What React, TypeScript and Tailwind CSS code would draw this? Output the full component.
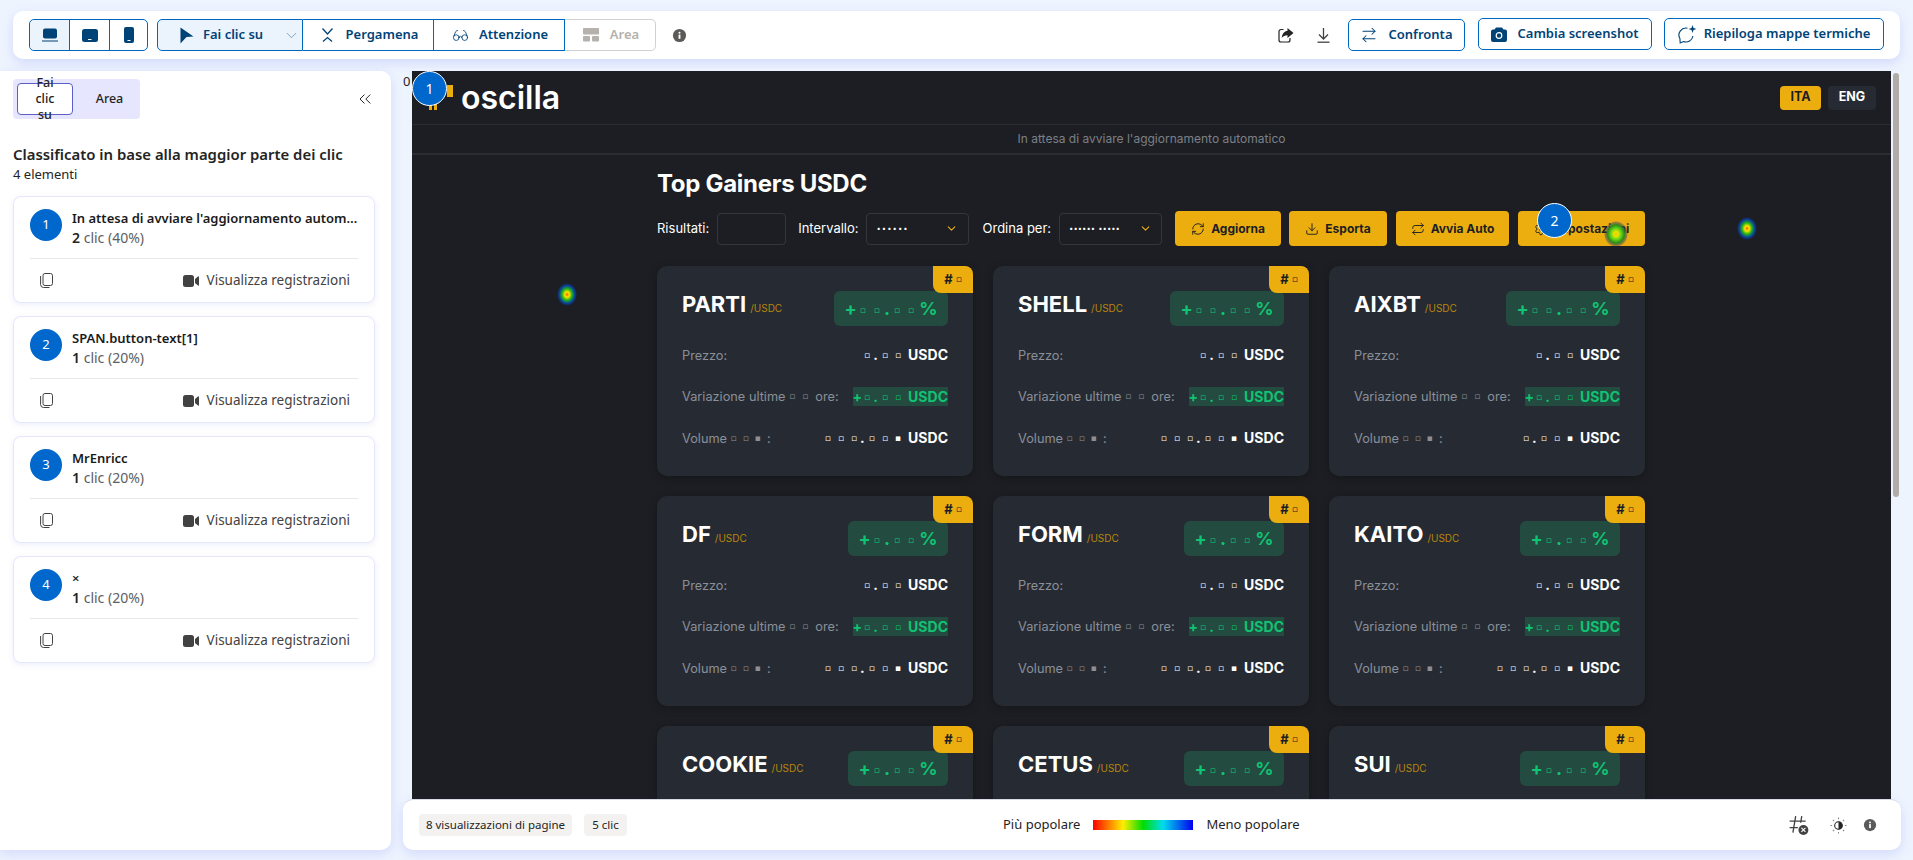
import { ChevronDown, ChevronsLeft, ArrowRightLeft, Glasses, RefreshCw, Download, Repeat, Settings } from "lucide-react";

const navy = "#004377";

function Info({ size = 16 }: { size?: number }) {
  return (
    <svg width={size} height={size} viewBox="0 0 16 16">
      <circle cx="8" cy="8" r="7" fill="#5c5a58" />
      <rect x="7" y="7" width="2" height="4.5" fill="#fff" />
      <circle cx="8" cy="5" r="1.1" fill="#fff" />
    </svg>
  );
}

function Laptop() {
  return (
    <svg width="16" height="14" viewBox="0 0 16 14" fill={navy}>
      <rect x="1" y="0.5" width="14" height="10" rx="2" />
      <rect x="0" y="12.5" width="16" height="1" />
    </svg>
  );
}

function Tablet() {
  return (
    <svg width="16" height="13" viewBox="0 0 16 13">
      <rect x="0" y="0" width="16" height="13" rx="2.5" fill={navy} />
      <rect x="6" y="10" width="3.5" height="1" fill="#fff" />
    </svg>
  );
}

function Phone() {
  return (
    <svg width="10" height="16" viewBox="0 0 10 16">
      <rect x="0" y="0" width="10" height="16" rx="2" fill={navy} />
      <rect x="3.5" y="13" width="3" height="1" fill="#fff" />
    </svg>
  );
}

function Cursor() {
  return (
    <svg width="14" height="17" viewBox="0 0 14 17" fill={navy}>
      <path d="M0.5 0.5 L13.5 9.5 L6.5 10 L0.5 16.5 Z" />
    </svg>
  );
}

function Scroll() {
  return (
    <svg width="11" height="14" viewBox="0 0 11 14" fill="none" stroke={navy} strokeWidth="1.3">
      <path d="M0.5 0.5 L5.5 6 L10.5 0.5" />
      <path d="M1 13.5 L5.5 9.5 L10 13.5" />
    </svg>
  );
}

function AreaIcon() {
  return (
    <svg width="16" height="14" viewBox="0 0 16 14" fill="#b5b1ac">
      <rect x="0" y="0" width="16" height="6.5" rx="1" />
      <rect x="0" y="8" width="7" height="5.5" rx="1" />
      <rect x="9" y="8" width="7" height="5.5" rx="1" />
    </svg>
  );
}

function ShareIcon() {
  return (
    <svg width="16" height="16" viewBox="0 0 16 16" fill="none">
      <path d="M5.5 2.5 H3 a2 2 0 0 0 -2 2 V13 a2 2 0 0 0 2 2 H10 a2 2 0 0 0 2 -2 V11" stroke="#242424" strokeWidth="1.2" />
      <path d="M9.5 1 L15.5 6 L9.5 11 V8.2 C7 8.2 5 9 3.8 11 C4 7.2 6.2 4.2 9.5 3.8 Z" fill="#242424" />
    </svg>
  );
}

function SaveIcon() {
  return (
    <svg width="13" height="15" viewBox="0 0 13 15" fill="none" stroke="#424242" strokeWidth="1.3">
      <path d="M6.5 0 V10.5 M2 6.5 L6.5 11 L11 6.5" />
      <path d="M0.5 14.2 H12.5" />
    </svg>
  );
}

function CameraIcon() {
  return (
    <svg width="16" height="15" viewBox="0 0 16 15">
      <path d="M5 0.5 H11 L12.5 2.5 H14 a2 2 0 0 1 2 2 V13 a2 2 0 0 1 -2 2 H2 a2 2 0 0 1 -2 -2 V4.5 a2 2 0 0 1 2 -2 H3.5 Z" fill={navy} />
      <circle cx="8" cy="8.5" r="2.8" fill="none" stroke="#fff" strokeWidth="1.2" />
    </svg>
  );
}

function SummaryIcon() {
  return (
    <svg width="19" height="20" viewBox="0 0 19 20" fill="none">
      <path d="M9.5 4.2 A7 7 0 0 0 1.9 14.5 L2.2 19 L5.5 17.5 A7 7 0 0 0 14.9 12" stroke={navy} strokeWidth="1.1" />
      <path d="M14.5 1 L15.5 4 L18.5 5 L15.5 6 L14.5 9 L13.5 6 L10.5 5 L13.5 4 Z" fill={navy} />
    </svg>
  );
}

function CopyIcon() {
  return (
    <svg width="13" height="15" viewBox="0 0 13 15" fill="none" stroke="#424242" strokeWidth="1">
      <rect x="3" y="0.5" width="9.5" height="12" rx="2" />
      <path d="M0.6 3 V11.5 A3 3 0 0 0 3.6 14.5 H9.5" />
    </svg>
  );
}

function VideoIcon() {
  return (
    <svg width="16" height="12" viewBox="0 0 16 12" fill="#424242">
      <rect x="0" y="0" width="11" height="12" rx="2.5" />
      <path d="M12 4 L15 1.5 Q16 1 16 2 V10 Q16 11 15 10.5 L12 8 Z" />
    </svg>
  );
}

function HashOff() {
  return (
    <svg width="20" height="21" viewBox="0 0 18 19" fill="none">
      <path d="M6 1 L3.5 16 M11.5 1 L10.5 7 M0.5 5.5 H15 M0.5 11.5 H8" stroke="#424242" strokeWidth="1.2" />
      <circle cx="13" cy="13.5" r="4.5" fill="#424242" />
      <path d="M11.2 11.7 L14.8 15.3 M14.8 11.7 L11.2 15.3" stroke="#fff" strokeWidth="1" />
    </svg>
  );
}

function ContrastIcon() {
  return (
    <svg width="17" height="17" viewBox="0 0 16 16" fill="none">
      <circle cx="8" cy="8" r="3.6" fill="#fff" stroke="#242424" strokeWidth="1" />
      <path d="M8 4.4 A3.6 3.6 0 0 1 8 11.6 Z" fill="#242424" />
      <path d="M8 0.5 V2 M8 14 V15.5 M0.5 8 H2 M14 8 H15.5 M2.7 2.7 L3.8 3.8 M12.2 12.2 L13.3 13.3 M2.7 13.3 L3.8 12.2 M12.2 3.8 L13.3 2.7" stroke="#8a8886" strokeWidth="1" />
    </svg>
  );
}

function Logo() {
  return (
    <svg width="28" height="25" viewBox="0 0 28 25" fill="#ecae0e">
      <rect x="22" y="0" width="6" height="12" />
      <rect x="4" y="18" width="3" height="7" />
      <rect x="9" y="18" width="3" height="7" />
    </svg>
  );
}

// the capture had its digits masked, so they are little squares in the picture
function Mask({ text, pitch = "tracking-[7px]" }: { text: string; pitch?: string }) {
  return <span className={`font-['DejaVu_Sans'] align-[2px] text-[9px] font-normal ${pitch}`}>{text}</span>;
}

function Num({ parts, pitch, tail = "tracking-[3px]" }: { parts: string; pitch?: string; tail?: string }) {
  const [whole, frac] = parts.split(".");
  return (
    <span>
      {whole.length > 1 && <Mask text={whole.slice(0, -1)} pitch={pitch} />}
      <Mask text={whole.slice(-1)} pitch={tail} />
      <span className="mr-[4px] font-bold">.</span>
      <Mask text={frac} pitch={pitch} />
    </span>
  );
}

type Coin = { name: string; pct: string; price: string; change: string; volume: string };

function CoinCard({ coin }: { coin: Coin }) {
  return (
    <div className="relative h-[210px] w-[316px] rounded-[10px] bg-[#262b33] px-[25px] pt-[25px] shadow-[0_2px_8px_rgba(0,0,0,0.25)]">
      <div className="absolute right-0 top-0 flex h-[27px] w-[40px] items-center justify-center gap-[3px] rounded-bl-[8px] rounded-tr-[8px] bg-[#ecae0e] text-[13px] font-bold text-[#1c1e23]">
        #<Mask text="▫" pitch="tracking-normal" />
      </div>
      <div className="flex items-center justify-between">
        <div className="mt-[-9px] flex items-baseline gap-[4px]">
          <span className="text-[22px] font-bold leading-[28px] text-white">{coin.name}</span>
          <span className="text-[10px] text-[#b8860b]">/USDC</span>
        </div>
        <div className={`flex h-[35px] items-center justify-center rounded-[6px] bg-[#234b40] text-[18px] font-bold text-[#10c474] ${coin.pct.length > 4 ? "w-[114px]" : "w-[100px]"}`}>
          +<span className="ml-[3px]"><Num parts={coin.pct.slice(0, -1)} pitch="tracking-[8px]" tail="tracking-[4px]" /><Mask text={coin.pct.slice(-1)} pitch="tracking-[5px]" /></span>%
        </div>
      </div>
      <div className="mt-[18px] flex flex-col gap-[20px] text-[12.75px] leading-[21px]">
        <div className="flex items-center justify-between">
          <span className="text-[#8a8f98]">Prezzo:</span>
          <span className="text-[14px] font-bold text-white">
            <Num parts={coin.price} />USDC
          </span>
        </div>
        <div className="flex items-center justify-between">
          <span className="text-[#8a8f98]">
            Variazione ultime <Mask text="▫▫" />ore:
          </span>
          <span className="flex h-[19px] w-[95px] items-center justify-end whitespace-nowrap bg-[#234b40] text-[14px] font-bold text-[#10c474]">
            <span>+<span className="ml-[2px]"><Num parts={coin.change} /></span>USDC</span>
          </span>
        </div>
        <div className="flex items-center justify-between">
          <span className="text-[#8a8f98]">
            Volume <Mask text="▫▫▪" pitch="tracking-[6px]" />:
          </span>
          <span className="text-[14px] font-bold text-white">
            <Num parts={coin.volume} />USDC
          </span>
        </div>
      </div>
    </div>
  );
}

const coins: Coin[] = [
  { name: "PARTI", pct: "▫▫.▫▫", price: "▫.▫▫", change: "▫.▫▫", volume: "▫▫▫.▫▫▪" },
  { name: "SHELL", pct: "▫▫.▫▫", price: "▫.▫▫", change: "▫.▫▫", volume: "▫▫▫.▫▫▪" },
  { name: "AIXBT", pct: "▫▫.▫▫", price: "▫.▫▫", change: "▫.▫▫", volume: "▫.▫▫▪" },
  { name: "DF", pct: "▫.▫▫", price: "▫.▫▫", change: "▫.▫▫", volume: "▫▫▫.▫▫▪" },
  { name: "FORM", pct: "▫.▫▫", price: "▫.▫▫", change: "▫.▫▫", volume: "▫▫▫.▫▫▪" },
  { name: "KAITO", pct: "▫.▫▫", price: "▫.▫▫", change: "▫.▫▫", volume: "▫▫▫.▫▫▪" },
  { name: "COOKIE", pct: "▫.▫▫", price: "▫.▫▫", change: "▫.▫▫", volume: "▫▫▫.▫▫▪" },
  { name: "CETUS", pct: "▫.▫▫", price: "▫.▫▫", change: "▫.▫▫", volume: "▫▫▫.▫▫▪" },
  { name: "SUI", pct: "▫.▫▫", price: "▫.▫▫", change: "▫.▫▫", volume: "▫▫▫.▫▫▪" },
];

const clicks = [
  { n: 1, title: "In attesa di avviare l'aggiornamento automatico", count: 2, pct: 40 },
  { n: 2, title: "SPAN.button-text[1]", count: 1, pct: 20 },
  { n: 3, title: "MrEnricc", count: 1, pct: 20 },
  { n: 4, title: "×", count: 1, pct: 20 },
];

function ClickCard({ item }: { item: (typeof clicks)[number] }) {
  return (
    <div className="h-[107px] w-[362px] rounded-[8px] border border-[#e6e6ff] bg-white px-[16px] pt-[12px] shadow-[0_2px_6px_rgba(90,100,220,0.1)]">
      <div className="flex h-[49px] gap-[10px]">
        <div className="flex h-[32px] w-[32px] shrink-0 items-center justify-center rounded-full bg-[#0067cc] text-[13px] text-white">
          {item.n}
        </div>
        <div className="min-w-0 flex-1">
          <div className="truncate text-[13px] font-semibold leading-[19px] text-[#1a1a1a]">{item.title}</div>
          <div className="text-[14px] leading-[19px] text-[#605e5c]">
            <span className="font-semibold text-[#242424]">{item.count}</span> clic ({item.pct}%)
          </div>
        </div>
      </div>
      <div className="flex h-[44px] items-center justify-between border-t border-[#e8e8e8] pl-[10px] pr-[8px]">
        <CopyIcon />
        <div className="flex items-center gap-[8px] text-[13.5px] text-[#424242]">
          <VideoIcon />
          Visualizza registrazioni
        </div>
      </div>
    </div>
  );
}

function CircleMark({ n, className }: { n: number; className: string }) {
  return (
    <div className={`absolute flex h-[35px] w-[35px] items-center justify-center rounded-full border border-white bg-[#0067cc] font-['Noto_Sans',sans-serif] text-[14px] text-white ${className}`}>
      {n}
    </div>
  );
}

function GoldButton({ icon, label, className }: { icon: React.ReactNode; label: string; className: string }) {
  return (
    <button className={`flex h-[35px] items-center justify-center gap-[6px] rounded-[4px] bg-[#ecae0e] text-[12px] font-bold text-[#1c1e23] ${className}`}>
      {icon}
      {label}
    </button>
  );
}

export default function App() {
  return (
    <div className="flex h-[860px] w-[1913px] flex-col overflow-hidden bg-[#eef4fe] font-['Noto_Sans',sans-serif] text-[#242424]">
      <header className="mx-[13px] mt-[11px] flex h-[48px] w-[1887px] shrink-0 items-center rounded-[10px] bg-white px-[16px] shadow-[0_4px_12px_rgba(90,100,240,0.18)]">
        <div className="flex h-[32px] w-[119px] rounded-[5px] border border-[#0067c0]">
          <div className="flex w-[40px] items-center justify-center rounded-l-[5px] border-r border-[#0067c0] bg-[#ebf3fc]"><Laptop /></div>
          <div className="flex w-[40px] items-center justify-center border-r border-[#0067c0]"><Tablet /></div>
          <div className="flex flex-1 items-center justify-center"><Phone /></div>
        </div>
        <div className="ml-[9px] flex h-[32px] w-[499px] text-[13px] font-semibold text-[#004377]">
          <div className="flex w-[146px] items-center rounded-l-[5px] border border-[#0067c0] bg-[#ebf3fc] pl-[22px]">
            <Cursor />
            <span className="ml-[9px]">Fai clic su</span>
            <ChevronDown size={17} strokeWidth={1} color="#5c7fa3" className="ml-[20px]" />
          </div>
          <div className="flex w-[131px] items-center justify-center gap-[13px] border-y border-r border-[#0067c0] pl-[4px]">
            <Scroll />
            Pergamena
          </div>
          <div className="flex w-[131px] items-center justify-center gap-[10px] border-y border-r border-[#0067c0] pl-[2px]">
            <Glasses size={17} strokeWidth={1.2} />
            Attenzione
          </div>
          <div className="flex w-[91px] items-center justify-center gap-[11px] rounded-r-[5px] border-y border-r border-[#d1d1d1] pl-[2px] text-[#b5b1ac]">
            <AreaIcon />
            Area
          </div>
        </div>
        <div className="ml-[16px]"><Info size={15} /></div>
        <div className="ml-auto flex items-center">
          <ShareIcon />
          <div className="ml-[23px]"><SaveIcon /></div>
          <button className="ml-[18px] flex h-[32px] w-[117px] items-center justify-center gap-[10px] rounded-[5px] border border-[#0067c0] text-[13px] font-semibold text-[#004377]">
            <ArrowRightLeft size={18} strokeWidth={1.4} />
            Confronta
          </button>
          <button className="mb-[2px] ml-[13px] flex h-[32px] w-[174px] items-center justify-center gap-[10px] rounded-[5px] border border-[#0067c0] text-[13px] font-semibold text-[#004377]">
            <CameraIcon />
            Cambia screenshot
          </button>
          <button className="mb-[2px] ml-[12px] flex h-[32px] w-[220px] items-center justify-center gap-[7px] rounded-[5px] border border-[#0067c0] text-[13px] font-semibold text-[#004377]">
            <SummaryIcon />
            Riepiloga mappe termiche
          </button>
        </div>
      </header>

      <div className="mt-[12px] flex h-[779px] shrink-0">
        <aside className="h-full w-[391px] shrink-0 rounded-r-[10px] bg-white px-[13px] pt-[8px] shadow-[0_4px_12px_rgba(90,100,240,0.18)]">
          <div className="flex items-center justify-between">
            <div className="flex h-[40px] w-[127px] items-center rounded-[4px] bg-[#e6e6ff] pl-[4px] text-[12.5px] font-medium">
              <div className="flex h-[32px] w-[56px] items-center justify-center rounded-[4px] border border-[#5b5fc7] bg-white px-[12px] text-center leading-[16px]">
                Fai clic su
              </div>
              <div className="flex-1 pl-[6px] text-center">Area</div>
            </div>
            <ChevronsLeft size={20} strokeWidth={1.2} color="#242424" className="mr-[3px]" />
          </div>
          <h2 className="mt-[25px] text-[14.9px] font-semibold leading-[20px]">Classificato in base alla maggior parte dei clic</h2>
          <div className="text-[13px] leading-[20px]">4 elementi</div>
          <div className="mt-[12px] flex flex-col gap-[13px]">
            {clicks.map((c) => (
              <ClickCard key={c.n} item={c} />
            ))}
          </div>
        </aside>

        <main className="ml-[12px] flex h-full w-[1498px] flex-col">
          <div className="flex h-[728px] shrink-0">
            <div className="w-[9px] shrink-0 pt-[2px] text-[13px] leading-[16px]">0</div>
            <div className="relative h-full w-[1479px] shrink-0 overflow-hidden bg-[#1c1e23] font-['Inter',sans-serif]">
              <div className="flex h-[54px] items-center justify-between border-b border-[#2a2d33] pl-[13px] pr-[15px]">
                <div className="flex items-center gap-[8px]">
                  <Logo />
                  <span className="text-[32px] font-semibold leading-none text-white">oscilla</span>
                </div>
                <div className="flex gap-[7px] text-[12.5px] font-bold">
                  <div className="flex h-[24px] w-[41px] items-center justify-center rounded-[4px] bg-[#ecae0e] text-[#1c1e23]">ITA</div>
                  <div className="flex h-[24px] w-[48px] items-center justify-center rounded-[4px] bg-[#262b33] text-white">ENG</div>
                </div>
              </div>
              <div className="flex h-[30px] items-center justify-center border-b-2 border-[#2a2d33] text-[12px] text-[#7d8087]">
                In attesa di avviare l'aggiornamento automatico
              </div>
              <div className="ml-[245px] w-[988px] pt-[13px]">
                <h1 className="text-[24px] font-bold leading-[32px] tracking-[-0.3px] text-white">Top Gainers USDC</h1>
                <div className="mt-[11px] flex h-[35px] items-center text-[13px] text-white">
                  <span>Risultati:</span>
                  <div className="ml-[8px] h-[32px] w-[69px] rounded-[4px] border border-[#33363c]" />
                  <span className="ml-[12px]">Intervallo:</span>
                  <div className="ml-[7px] flex h-[32px] w-[103px] items-center justify-between rounded-[4px] border border-[#33363c] px-[10px] text-[13px] font-bold tracking-[1px]">
                    ······
                    <ChevronDown size={13} color="#ecae0e" />
                  </div>
                  <span className="ml-[14px]">Ordina per:</span>
                  <div className="ml-[8px] flex h-[32px] w-[103px] items-center justify-between rounded-[4px] border border-[#33363c] px-[9px] text-[13px] font-bold">
                    ······ ·····
                    <ChevronDown size={13} color="#ecae0e" />
                  </div>
                  <GoldButton className="ml-[13px] w-[106px]" icon={<RefreshCw size={14} strokeWidth={1.6} />} label="Aggiorna" />
                  <GoldButton className="ml-[8px] w-[98px]" icon={<Download size={14} strokeWidth={1.6} />} label="Esporta" />
                  <GoldButton className="ml-[9px] w-[113px]" icon={<Repeat size={14} strokeWidth={1.6} />} label="Avvia Auto" />
                  <GoldButton className="ml-[9px] w-[127px]" icon={<Settings size={14} strokeWidth={1.6} />} label="Impostazioni" />
                </div>
                <div className="mt-[20px] grid grid-cols-[316px_316px_316px] gap-[20px]">
                  {coins.map((c) => (
                    <CoinCard key={c.name} coin={c} />
                  ))}
                </div>
              </div>

              <CircleMark n={1} className="left-0 top-0" />
              <CircleMark n={2} className="left-[1125px] top-[132px]" />
              <div className="absolute left-[1192px] top-[150px] h-[26px] w-[24px] rounded-full bg-[radial-gradient(closest-side,#f2c200_0%,#e8e600_18%,#5fd11a_45%,#2e8a1a_70%,rgba(20,20,150,0.35)_90%,rgba(0,0,120,0)_100%)]" />
              <div className="absolute left-[1325px] top-[146px] h-[23px] w-[20px] rounded-full bg-[radial-gradient(closest-side,#ff5a00_0%,#ffe600_22%,#1fb21a_50%,#0a3fa0_78%,rgba(0,0,130,0)_100%)]" />
              <div className="absolute left-[145px] top-[212px] h-[23px] w-[20px] rounded-full bg-[radial-gradient(closest-side,#ff5a00_0%,#ffe600_22%,#1fb21a_50%,#0a3fa0_78%,rgba(0,0,130,0)_100%)]" />
            </div>
            <div className="ml-[2px] mt-[2px] h-[424px] w-[6px] rounded-full bg-[#b0aca8]" />
          </div>

          <footer className="flex h-[51px] w-[1498px] shrink-0 items-center rounded-[10px] border-t border-[#d8dbe6] bg-white pl-[16px] pr-[24px] shadow-[0_4px_12px_rgba(90,100,240,0.18)]">
            <div className="flex w-[584px] gap-[12px] text-[11.5px]">
              <span className="flex h-[22px] w-[153px] items-center justify-center rounded-[4px] bg-[#f3f2f1]">8 visualizzazioni di pagine</span>
              <span className="flex h-[22px] w-[43px] items-center justify-center rounded-[4px] bg-[#f3f2f1]">5 clic</span>
            </div>
            <div className="flex items-center text-[13px]">
              <span>Più popolare</span>
              <div className="mx-[13px] h-[10px] w-[100px] bg-[linear-gradient(90deg,#ff0000,#ffee00_30%,#00dd00_50%,#00ddee_70%,#0000ee)]" />
              <span>Meno popolare</span>
            </div>
            <div className="ml-auto flex items-center">
              <HashOff />
              <div className="ml-[21px]"><ContrastIcon /></div>
              <div className="ml-[16px]"><Info size={14} /></div>
            </div>
          </footer>
        </main>
      </div>
    </div>
  );
}
